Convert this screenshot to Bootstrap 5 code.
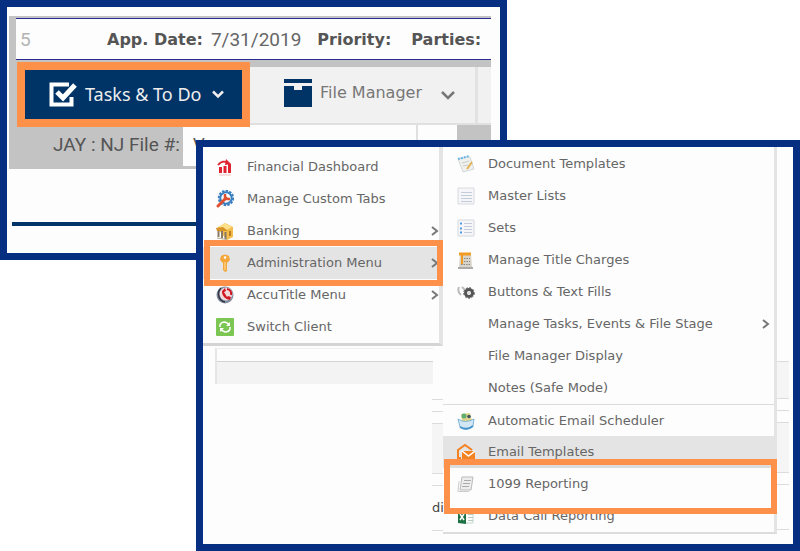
<!DOCTYPE html>
<html lang="en">
<head>
<meta charset="utf-8">
<meta name="viewport" content="width=device-width, initial-scale=1">
<title>Tasks &amp; To Do – Email Templates</title>
<link href="https://cdn.jsdelivr.net/npm/bootstrap@5.3.0/dist/css/bootstrap.min.css" rel="stylesheet">
<style>
:root { --frame: #062f81; --mark: #fe914a; --navy: #003366; --ink: #666; --line: #dcdcdc; }
body { font-family: "DejaVu Sans", sans-serif; font-size: 13px; color: var(--ink); background: #fff; }
.stage { display: grid; grid-template-columns: 196px 1fr 293px; grid-template-rows: 140px 120px auto; }
.win { border: 7px solid var(--frame); background: #fdfdfd; min-width: 0; }
.win-file { grid-column: 1 / 3; grid-row: 1 / 3; }
.win-menu { grid-column: 2 / 4; grid-row: 2 / 4; z-index: 2; }
.file-area { margin: 9px 9px 0 2px; background: #c3c3c3; padding: 2px 0 0 7px; }
.facts { height: 42px; border-top: 1px solid #2a2a90; border-bottom: 1px solid #2a2a90; background: #fdfdfd; font-size: 16px; padding: 2px 0 0 4px; }
.facts b, .facts span { white-space: nowrap; }
.roboto { font-family: Roboto, sans-serif; font-size: 19px; }
.facts b { color: #555; }
.num { width: 87px; color: #b4b4b4; }
.tools { height: 65px; position: relative; padding-top: 7px; }
.btn-tasks { width: 233px; height: 65px; margin: -5px 0 -4px 1px; border: 8px solid var(--mark); background: var(--navy); color: #eee; font-family: "Noto Sans", sans-serif; font-size: 18px; padding: 0 18px 0 24px; z-index: 1; position: relative; white-space: nowrap; }
.tab-strip { height: 58px; background: #f1f1f1; border-bottom: 2px solid #e0e0e0; }
.btn-files { border: 0; border-right: 3px solid #e2e2e2; background: none; color: #777; font-size: 16px; padding: 0 20px 4px 34px; width: 228px; white-space: nowrap; }
.file-row { height: 44px; color: #555; padding-bottom: 3px; }
.file-row label { width: 167px; padding-left: 37px; white-space: nowrap; }
.file-row input { width: 233px; border: 0; background: #fdfdfd; padding: 0 10px; color: #555; font-size: 17px; }
.file-row .cell { width: 41px; background: #fdfdfd; border-left: 2px solid #e0e0e0; }
.rule { height: 4px; background: var(--navy); margin: 53px 0 0 5px; }
.left-col { width: 240px; }
.menu-left { padding: 4px 0 0; border-bottom: 3px solid #d4d4d4; border-right: 4px solid #e4e4e4; }
.item { display: flex; align-items: center; gap: 13px; height: 32px; padding: 0 4px 0 14px; color: var(--ink); text-decoration: none; position: relative; white-space: nowrap; }
.menu-left .item { padding: 0 0 0 13px; }
.item > svg:first-child, .item > i { width: 18px; height: 18px; flex: none; }
.item .chev { margin-left: auto; flex: none; }
.item.active-row { background: #e4e4e4; }
.marked { z-index: 2; background: #fdfdfd; }
.marked::after { content: ""; position: absolute; border: 6px solid var(--mark); }
.mark-admin::after { inset: -7px -4px -7px 1px; }
.mark-report::after { inset: -9px -3px -14px 1px; }
.mark-report::before { content: ""; position: absolute; inset: -3px 3px auto 7px; height: 3px; background: #dcdcdc; }
.menu-right { padding-top: 1px; border-right: 3px solid #e4e4e4; border-bottom: 2px solid #dcdcdc; margin-bottom: 10px; }
.divided { border-top: 1px solid var(--line); }
.ghost-table { margin: 2px 10px 0 12px; border-top: 1px solid #eee; border-left: 2px solid #e6e6e6; }
.ghost-table div:first-child { height: 13px; border-bottom: 1px solid #d4d4d4; }
.ghost-table div:last-child { height: 22px; background: #f3f3f3; }
.ghost { width: 11px; color: #444; }
.ghost div { border-bottom: 1px solid var(--line); height: 12px; }
.ghost .tall { height: 50px; background: #f5f5f5; }
.ghost .row-text { height: 45px; padding-top: 12px; }
.right-ghost { padding-top: 214px; width: 12px; }
.right-ghost .first { height: 38px; background: #f5f5f5; border-top: 1px solid var(--line); }
</style>
<script src="https://cdn.jsdelivr.net/npm/bootstrap@5.3.0/dist/js/bootstrap.bundle.min.js"></script>
</head>
<body>
<main class="stage">
  <section class="win win-file">
    <div class="file-area">
      <div class="facts d-flex align-items-center">
        <span class="roboto num">5</span>
        <b>App. Date:</b><span class="roboto ms-2 me-3">7/31/2019</span>
        <b class="me-3">Priority:</b><b class="ms-1">Parties:</b>
      </div>
      <div class="tools d-flex">
        <button type="button" class="btn-tasks d-flex align-items-center">
          <svg width="28" height="26" viewBox="0 0 28 26" fill="none"><path d="M20 2.500H2.500v20h20V15" stroke="#fff" stroke-width="4"/><path d="M8 10l6 6L26 3" stroke="#fff" stroke-width="5"/></svg>
          <span class="ms-2">Tasks &amp; To Do</span>
          <svg class="ms-auto" width="12" height="9" viewBox="0 0 12 9" fill="none"><path d="M1 1.500l5 5 5-5" stroke="#eee" stroke-width="2.500"/></svg>
        </button>
        <div class="tab-strip flex-grow-1 d-flex">
          <button type="button" class="btn-files d-flex align-items-center">
            <svg width="28" height="28" viewBox="0 0 28 28"><path fill="#003366" d="M0 0h28v4H0zM0 7h10v4h8V7h10v21H0z"/></svg>
            <span class="ms-2">File Manager</span>
            <svg class="ms-auto mt-1" width="14" height="9" viewBox="0 0 14 9" fill="none"><path d="M1 1l6 6 6-6" stroke="#777" stroke-width="2.500"/></svg>
          </button>
        </div>
      </div>
      <div class="file-row d-flex">
        <label for="fileNo" class="roboto d-flex align-items-center">JAY : NJ File #:</label>
        <input id="fileNo" type="text" value="V">
        <div class="cell"></div>
      </div>
    </div>
    <div class="rule"></div>
  </section>

  <section class="win win-menu d-flex">
    <div class="left-col flex-shrink-0 d-flex flex-column">
      <nav class="menu-left">
        <a class="item" href="#"><svg viewBox="0 0 18 18"><path fill="#df2430" d="M3 9h3v6H3zM7.500 8h3v7h-3zM12 6h3v9h-3z"/><path d="M2 7c3-4 7-4 10-2" stroke="#df2430" stroke-width="2" fill="none"/><path fill="#df2430" d="M10 1l5 5-6 1z"/><path stroke="#f4c4c4" d="M3 17h12"/></svg>Financial Dashboard</a>
        <a class="item" href="#"><svg viewBox="0 0 18 18" fill="none"><circle cx="10" cy="8" r="7.200" stroke="#3b7fc0" stroke-width="2" stroke-dasharray="2.500 1.200"/><circle cx="10" cy="8" r="5.700" stroke="#3b7fc0" stroke-width="2"/><path d="M2 16l8-8" stroke="#e05030" stroke-width="3" stroke-linecap="round"/><path d="M9 4v5h5" stroke="#e05030" stroke-width="2.500"/></svg>Manage Custom Tabs</a>
        <a class="item" href="#"><svg viewBox="0 0 18 18"><path fill="#f2bd4c" d="M1 6l8-5 8 4v10l-6 3z"/><path fill="#ffe08a" d="M2 5l7-4 7 4-5 3z"/><path fill="#d79428" d="M0 6l7-1 5 4H1z"/><path stroke="#8a7a64" stroke-width="2" d="M2.500 9v6M6 9v7M9.500 10v7"/><path stroke="#b5a58c" d="M1 16l10 1.500"/><path fill="#be7c20" d="M13 9h2v5h-2z"/></svg>Banking<svg class="chev" width="8" height="10" viewBox="0 0 8 10" fill="none"><path d="M1 1l5 4-5 4" stroke="#777" stroke-width="2"/></svg></a>
        <a class="item active-row marked mark-admin" href="#"><svg viewBox="0 0 18 18"><path fill="#f4a738" d="M5 2q4-3 8 0l1 4-3 3v8l-2 1-2-2V9L4 6z"/><path stroke="#ffe0a0" d="M9 8v8"/><circle cx="9" cy="3.500" r="1.300" fill="#fff"/></svg>Administration Menu<svg class="chev" width="8" height="10" viewBox="0 0 8 10" fill="none"><path d="M1 1l5 4-5 4" stroke="#777" stroke-width="2"/></svg></a>
        <a class="item" href="#"><svg viewBox="0 0 18 18"><circle cx="9" cy="9" r="8.500" fill="#8290a0"/><circle cx="10" cy="8" r="6.500" fill="#f1dada"/><path d="M5 2c-5 5-2 13 4 14" stroke="#334" stroke-width="1.500" fill="none"/><path d="M6 5c0 5 3 8 8 9l1-3-3-1-1 1-3-5 2-1-1-3z" fill="#d01824"/><path d="M11 3q5 1 4 6" stroke="#d01824" stroke-width="2" fill="none"/></svg>AccuTitle Menu<svg class="chev" width="8" height="10" viewBox="0 0 8 10" fill="none"><path d="M1 1l5 4-5 4" stroke="#777" stroke-width="2"/></svg></a>
        <a class="item" href="#"><svg viewBox="0 0 18 18" fill="none"><rect width="18" height="18" rx="1" fill="#7cc653"/><path d="M4 9V7q1-3 5-3l4 2M14 9v2q-1 3-5 3l-4-2" stroke="#fff" stroke-width="1.500"/><path d="M14 4v4h-4zM4 14v-4h4z" fill="#fff"/></svg>Switch Client</a>
      </nav>
      <div class="ghost-table"><div></div><div></div></div>
      <div class="ghost ms-auto">
        <div class="mt-1"></div><div></div><div></div><div class="tall"></div><div></div><div class="row-text">di</div>
      </div>
    </div>
    <nav class="menu-right flex-grow-1">
      <a class="item" href="#"><svg viewBox="0 0 18 18"><path fill="#f0f0ec" stroke="#d4d8dc" d="M1 4l12-2 4 12-11 3z"/><path stroke="#67b4e4" stroke-width="2" stroke-dasharray="2 1" d="M1 4l11-3"/><path stroke="#c8ccd0" d="M5 8l7-2M6 11l5-1"/><path stroke="#e2b150" stroke-width="2" d="M15 7l-5 7"/></svg>Document Templates</a>
      <a class="item" href="#"><svg viewBox="0 0 18 18"><path fill="#f6f6f8" stroke="#d8dae0" d="M1 1h16v16H1z"/><path stroke="#c2ccda" d="M4 5.500h11M4 8.500h11M4 11.500h11M4 14.500h11"/></svg>Master Lists</a>
      <a class="item" href="#"><svg viewBox="0 0 18 18"><path fill="#f6f6f8" stroke="#d4d9e0" d="M1 1h16v16H1z"/><path stroke="#4f9be0" stroke-width="2" d="M3 4.500h2M3 9.500h2M3 13.500h2"/><path stroke="#c2ccda" d="M7 4.500h8M7 7.500h8M7 10.500h8M7 13.500h8"/></svg>Sets</a>
      <a class="item" href="#"><svg viewBox="0 0 18 18"><path fill="#d9d4c9" d="M3 3h11l1 13H2z"/><path stroke="#f09b22" stroke-width="3" d="M2 3h12"/><path stroke="#f09b22" stroke-width="2" d="M5 4v9"/><path stroke="#888" stroke-dasharray="1.500 1" d="M7 7.500h6M7 10.500h6M4 13.500h9"/><path stroke="#aaa" stroke-width="2" d="M1 17h15"/></svg>Manage Title Charges</a>
      <a class="item" href="#"><svg viewBox="0 0 18 18" fill="none"><path d="M2 4q-2 5 2 8M5 4l3 3" stroke="#bbb" stroke-width="2"/><circle cx="12" cy="10" r="3.500" stroke="#555" stroke-width="3"/><circle cx="12" cy="10" r="5.300" stroke="#555" stroke-dasharray="2 1.500"/><circle cx="12" cy="10" r="1.500" fill="#ddd"/></svg>Buttons &amp; Text Fills</a>
      <a class="item" href="#"><i></i>Manage Tasks, Events &amp; File Stage<svg class="chev" width="8" height="10" viewBox="0 0 8 10" fill="none"><path d="M1 1l5 4-5 4" stroke="#777" stroke-width="2"/></svg></a>
      <a class="item" href="#"><i></i>File Manager Display</a>
      <a class="item" href="#"><i></i>Notes (Safe Mode)</a>
      <a class="item divided" href="#"><svg viewBox="0 0 18 18"><path fill="#e0d48a" d="M4 2l9-1 2 8-10 2z"/><circle cx="7" cy="4" r="2.500" fill="#62ad74"/><circle cx="12" cy="4.500" r="1.800" fill="#456"/><path fill="#d3e6f4" stroke="#7db4dc" d="M1 7q7 5 16 0l-1 7q-7 6-13 1z"/><path d="M3 15q7 4 13-1" stroke="#4593cb" stroke-width="2" fill="none"/></svg>Automatic Email Scheduler</a>
      <a class="item active-row" href="#"><svg viewBox="0 0 18 18" fill="none"><path d="M4 15H1V7l7-5 7 5" stroke="#f58220" stroke-width="2"/><path fill="#f58220" d="M5 8h13v9H5z"/><path d="M5 8l6.500 5L18 8" stroke="#fff" stroke-width="1.500"/></svg>Email Templates</a>
      <a class="item marked mark-report" href="#"><svg viewBox="0 0 18 18"><path fill="#ededed" stroke="#bbb" d="M5 2h11l-2 13H3z"/><path stroke="#aaa" d="M7 5.500h7M6 8.500h7M5 11.500h7"/><path fill="none" stroke="#ccc" d="M2 6L1 16.500h11"/></svg>1099 Reporting</a>
      <a class="item" href="#"><svg viewBox="0 0 18 18"><path fill="#fff" stroke="#c4d6ca" d="M8 4h8v12H8z"/><path stroke="#b4ccbc" d="M11 7.500h5M11 10.500h5M11 13.500h5"/><path fill="#1f7244" d="M1 4l8-1v14l-8-1z"/><path stroke="#fff" stroke-width="1.500" d="M3 7l4 6M7 7l-4 6"/></svg>Data Call Reporting</a>
    </nav>
    <div class="ghost right-ghost me-1">
      <div class="first"></div><div></div><div></div><div class="tall"></div><div></div><div class="row-text"></div>
    </div>
  </section>
</main>
</body>
</html>
